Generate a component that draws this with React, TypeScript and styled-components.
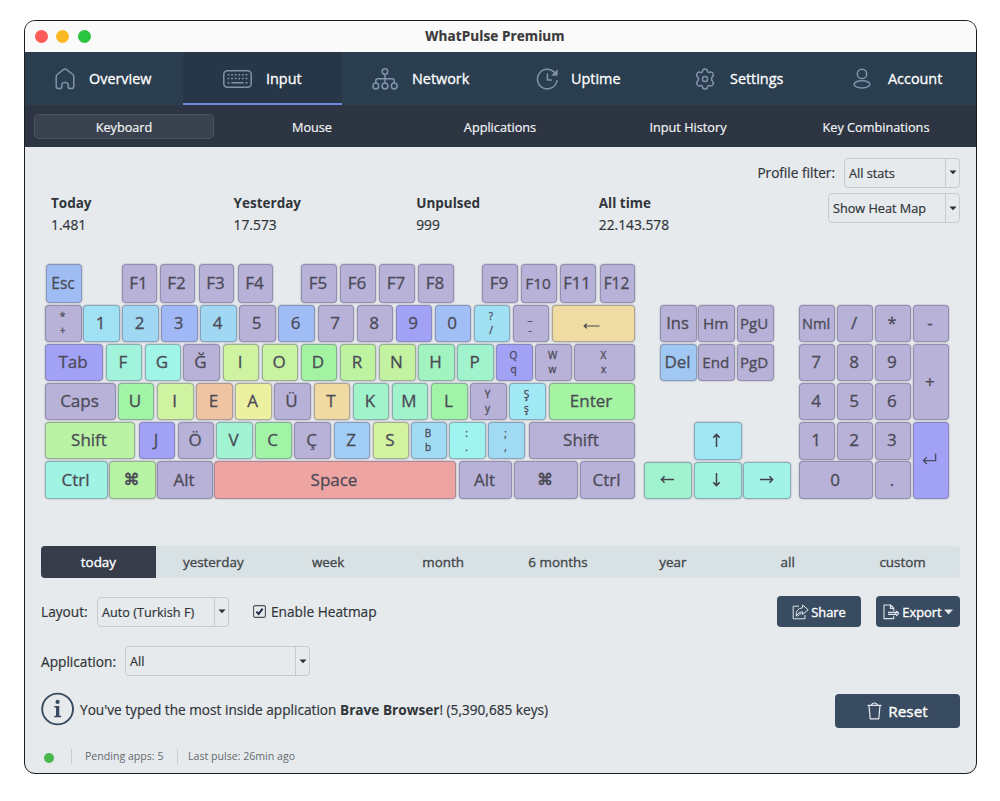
import React from 'react';
import styled, { createGlobalStyle, css } from 'styled-components';

const GlobalStyle = createGlobalStyle`
  * { box-sizing: border-box; }
  body {
    margin: 0;
    background: #fff;
    font-family: 'Open Sans', 'Noto Sans', sans-serif;
    font-size: 13.6px;
    color: #30353a;
    -webkit-text-stroke: 0.2px currentColor;
  }
`;

const Page = styled.div`
  width: 1000px;
  height: 801px;
  padding: 20px 23px 0 24px;
`;

const Window = styled.div`
  width: 953px;
  height: 754px;
  border: 1px solid #1c1c1e;
  border-radius: 11px;
  overflow: hidden;
  background: #e6eaed;
`;

const TitleBar = styled.header`
  position: relative;
  height: 31px;
  background: #fafafa;
  display: flex;
  align-items: center;
  padding: 0 10px;
  gap: 8.3px;
`;

const Light = styled.span<{ $color: string }>`
  width: 13px;
  height: 13px;
  border-radius: 50%;
  background: ${(p) => p.$color};
`;

const Title = styled.h1`
  position: absolute;
  left: 0;
  right: 11px;
  margin: 0;
  text-align: center;
  font-size: 13.5px;
  line-height: 31px;
  font-weight: 700;
  color: #3a3a3c;
  letter-spacing: 0.1px;
`;

const MainNav = styled.nav`
  display: grid;
  grid-template-columns: 158px 159px 156px 160px 158px 160px;
  height: 53px;
  background: #2b3e50;
`;

const NavItem = styled.a<{ $active?: boolean; $pad: number; $gap: number }>`
  display: flex;
  align-items: center;
  padding-left: ${(p) => p.$pad}px;
  gap: ${(p) => p.$gap}px;
  color: #fff;
  font-size: 14.4px;
  font-weight: 500;
  white-space: nowrap;
  -webkit-text-stroke-width: 0.3px;
  ${(p) =>
    p.$active &&
    css`
      background: #273748;
      box-shadow: inset 0 -2px #6f86e0;
    `}
  svg { flex: none; }
`;

const SubNav = styled.nav`
  display: grid;
  grid-template-columns: repeat(5, 180px);
  column-gap: 8px;
  height: 42px;
  padding: 9px 9px;
  background: #2d3442;
`;

const SubItem = styled.a<{ $active?: boolean }>`
  height: 25px;
  line-height: 24px;
  text-align: center;
  color: #f1f3f5;
  font-size: 12.7px;
  font-weight: 500;
  border: 1px solid ${(p) => (p.$active ? '#4b5260' : 'transparent')};
  border-radius: 5px;
  background: ${(p) => (p.$active ? '#3a414f' : 'transparent')};
`;

const Content = styled.main`
  padding: 11px 16px 0;
`;

const FilterRow = styled.div`
  display: flex;
  justify-content: flex-end;
  align-items: center;
  gap: 9px;
  height: 29px;
  font-weight: 500;
`;

const SelectBox = styled.div<{ $width: number }>`
  display: flex;
  width: ${(p) => p.$width}px;
  height: 30px;
  border: 1px solid #c6cbcf;
  border-radius: 4px;
  font-size: 12.7px;
  font-weight: 500;
  line-height: 29px;
  white-space: nowrap;
`;

const SelectText = styled.span`
  flex: 1;
  padding-left: 4px;
`;

const SelectArrow = styled.span`
  width: 14px;
  border-left: 1px solid #c6cbcf;
  display: flex;
  align-items: center;
  justify-content: center;
`;

const StatsRow = styled.div`
  display: flex;
  justify-content: space-between;
  height: 45px;
  margin-top: 6px;
  padding-left: 10px;
`;

const Stats = styled.dl`
  display: grid;
  grid-template-columns: repeat(4, 182.6px);
  margin: 0;
  line-height: 22px;
  font-weight: 500;
  dt { font-weight: 700; font-size: 13.5px; margin-top: -1px; -webkit-text-stroke-width: 0; }
  dd { margin: 0; font-size: 13.8px; }
`;

const Keyboard = styled.section`
  display: flex;
  height: 235px;
  margin: 26px 0 0 4px;
  color: #4b4b56;
  font-size: 17px;
  font-weight: 500;
  -webkit-text-stroke-width: 0.3px;
`;

const MainBlock = styled.div`
  display: flex;
  flex-direction: column;
  width: 590px;
`;

const KeyRow = styled.div<{ $height: number; $after: number }>`
  display: flex;
  height: ${(p) => p.$height}px;
  margin-bottom: ${(p) => p.$after}px;
`;

const Key = styled.div<{ $color?: string; $width?: number; $before?: number; $size?: number }>`
  flex: none;
  display: flex;
  flex-direction: column;
  align-items: center;
  justify-content: center;
  width: ${(p) => (p.$width ? `${p.$width}px` : 'auto')};
  margin-left: ${(p) => p.$before ?? 0}px;
  padding: 0 2px 1px 0;
  border: 1px solid rgba(110, 105, 135, 0.5);
  border-radius: 4px;
  background: ${(p) => p.$color ?? '#b8b1d8'};
  box-shadow: 0 0 1px 1px rgba(120, 120, 130, 0.2);
  font-size: ${(p) => p.$size ?? 17}px;
  line-height: 20px;
  white-space: nowrap;
`;

const DualLegend = styled.span`
  display: flex;
  flex-direction: column;
  align-items: center;
  font-size: 10px;
  line-height: 14px;
`;

const Command = styled.span`
  font-family: 'DejaVu Sans', sans-serif;
  font-size: 16px;
  -webkit-text-stroke-width: 0.6px;
`;

const SideBlock = styled.div`
  display: flex;
  flex-direction: column;
  justify-content: space-between;
  width: 147px;
  margin-left: 9px;
  padding-top: 41px;
`;

const EditKeys = styled.div`
  display: grid;
  grid-template: 37px 37px / repeat(3, 37px);
  column-gap: 1.3px;
  row-gap: 1.5px;
  margin-left: 16px;
`;

const ArrowKeys = styled.div`
  display: grid;
  grid-template: 37.5px 37.5px / repeat(3, 48px);
  gap: 1.6px;
`;

const NumPad = styled.div`
  display: grid;
  grid-template: repeat(5, 37.3px) / repeat(4, 36.4px);
  column-gap: 1.5px;
  row-gap: 1.8px;
  margin: 41px 0 0 8px;
`;

const Cell = styled(Key)<{ $col?: string; $row?: string }>`
  grid-column: ${(p) => p.$col ?? 'auto'};
  grid-row: ${(p) => p.$row ?? 'auto'};
`;

const RangeTabs = styled.div`
  display: grid;
  grid-template-columns: repeat(8, 1fr);
  height: 32px;
  margin-top: 47px;
  border-radius: 4px;
  overflow: hidden;
  background: #d8e1e4;
`;

const RangeTab = styled.button<{ $active?: boolean }>`
  border: 0;
  padding: 0;
  font: inherit;
  font-size: 13.4px;
  font-weight: 500;
  -webkit-text-stroke-width: 0.35px;
  color: ${(p) => (p.$active ? '#fff' : '#43474b')};
  background: ${(p) => (p.$active ? '#363c4a' : 'transparent')};
`;

const Toolbar = styled.div<{ $top: number; $height: number }>`
  display: flex;
  align-items: center;
  height: ${(p) => p.$height}px;
  margin-top: ${(p) => p.$top}px;
  font-weight: 500;
  white-space: nowrap;
`;

const FieldLabel = styled.span<{ $width: number }>`
  width: ${(p) => p.$width}px;
  font-size: 13.7px;
`;

const CheckLabel = styled.label`
  display: flex;
  align-items: center;
  gap: 5px;
  margin-left: 24px;
  font-size: 13.7px;
`;

const Actions = styled.div<{ $drop?: number }>`
  display: flex;
  gap: 15px;
  margin-left: auto;
  padding-top: ${(p) => p.$drop ?? 0}px;
`;

const Button = styled.button<{ $width: number; $height?: number; $size?: number; $gap?: number }>`
  display: flex;
  align-items: center;
  justify-content: center;
  gap: ${(p) => p.$gap ?? 2}px;
  width: ${(p) => p.$width}px;
  height: ${(p) => p.$height ?? 31}px;
  padding: 0;
  border: 0;
  border-radius: 4px;
  background: #394b60;
  color: #fff;
  font: inherit;
  font-size: ${(p) => p.$size ?? 12.9}px;
  font-weight: 500;
  -webkit-text-stroke-width: 0.35px;
`;

const Message = styled.p`
  margin: 0 0 0 5px;
  font-size: 13.65px;
  b { font-weight: 700; -webkit-text-stroke-width: 0; }
`;

const StatusBar = styled.footer`
  display: flex;
  align-items: center;
  height: 15px;
  margin: 23px 0 0 3px;
  font-size: 10.6px;
  color: #64696d;
  font-weight: 500;
  -webkit-text-stroke-width: 0;
`;

const StatusDot = styled.span`
  width: 10px;
  height: 10px;
  margin: 2px 17px 0 0;
  border-radius: 50%;
  background: #49b84c;
`;

const StatusText = styled.span<{ $width?: number; $pad: number }>`
  height: 15px;
  line-height: 15px;
  padding-left: ${(p) => p.$pad}px;
  width: ${(p) => (p.$width ? `${p.$width}px` : 'auto')};
  border-left: 1px solid #c9cdd0;
  white-space: nowrap;
`;

const stroke = { fill: 'none', stroke: '#8193ab', strokeWidth: 1.5, strokeLinecap: 'round', strokeLinejoin: 'round' } as const;

const HomeIcon = () => (
  <svg width="20" height="22" viewBox="0 0 20 22" {...stroke}>
    <path d="M1.2 8.6Q1.2 7.4 2.2 6.5L8.4 1.6Q10 .5 11.6 1.6L17.8 6.5Q18.8 7.4 18.8 8.6V18Q18.8 20.6 16.2 20.6H15Q13.2 20.6 13.2 18.8V16.6Q13.2 14.4 10 14.4T6.8 16.6V18.8Q6.8 20.6 5 20.6H3.8Q1.2 20.6 1.2 18Z" />
  </svg>
);

const KeyboardIcon = () => (
  <svg width="29" height="18" viewBox="0 0 29 18" {...stroke}>
    <rect x=".8" y=".8" width="27.4" height="16.4" rx="3.5" />
    <path strokeDasharray="1.8 1.8" strokeLinecap="butt" d="M4.5 4.8H25M4.5 8.6H25" />
    <path strokeLinecap="butt" d="M4.5 12.8H6.5M8.4 12.8H20.6M22.6 12.8H24.6" />
  </svg>
);

const NetworkIcon = () => (
  <svg width="26" height="22" viewBox="0 0 26 22" {...stroke}>
    <circle cx="13" cy="3.6" r="2.8" />
    <circle cx="3.8" cy="18" r="2.9" />
    <circle cx="13" cy="18" r="2.9" />
    <circle cx="22.2" cy="18" r="2.9" />
    <path d="M13 6.4V15M3.8 15V12.6Q3.8 10.8 5.6 10.8H20.4Q22.2 10.8 22.2 12.6V15" />
  </svg>
);

const UptimeIcon = () => (
  <svg width="23" height="22" viewBox="0 0 23 22" {...stroke}>
    <path d="M20.9 12.8A9.8 9.8 0 1 1 18.6 4.6L20.2 6.4" />
    <path d="M21.2 2.4V7.2H16.2Z" fill="#8193ab" strokeWidth=".8" />
    <path d="M11.4 6V12H15.4" />
  </svg>
);

const GearIcon = () => (
  <svg width="20" height="22" viewBox="0 0 20 22" {...stroke}>
    <path d="M7.5 3.2Q7.8 1 10 1T12.5 3.2Q13 4.9 14.8 4.3Q17 3.6 18 5.5T17.3 8.9Q15.7 11 17.3 13.1Q19 14.6 18 16.5T14.8 17.7Q13 17.1 12.5 18.8Q12.2 21 10 21T7.5 18.8Q7 17.1 5.2 17.7Q3 18.4 2 16.5T2.7 13.1Q4.3 11 2.7 8.9Q1 7.4 2 5.5T5.2 4.3Q7 4.9 7.5 3.2Z" />
    <circle cx="10" cy="11" r="2.6" />
  </svg>
);

const AccountIcon = () => (
  <svg width="18" height="21" viewBox="0 0 18 21" {...stroke}>
    <circle cx="9" cy="5.9" r="4.7" />
    <ellipse cx="9" cy="16.3" rx="7.9" ry="3.6" />
  </svg>
);

const Caret = () => (
  <svg width="8" height="5" viewBox="0 0 8 5">
    <path d="M.5 .5H7.5L4 4.3Z" fill="#2b2f38" />
  </svg>
);

const ArrowGlyph = ({ turn }: { turn: number }) => (
  <svg width="15" height="15" viewBox="0 0 15 15" fill="none" stroke="#43434e" strokeWidth="1.5">
    <path d="M14 7.5H1.4M4.6 4.3L1.4 7.5L4.6 10.7" transform={`rotate(${turn} 7.5 7.5)`} />
  </svg>
);

const BackspaceMark = styled.svg`
  margin: 6px 2px 0 0;
`;

const BackspaceGlyph = () => (
  <BackspaceMark width="17" height="8" viewBox="0 0 17 8" fill="none" stroke="#43434e" strokeWidth="1.2">
    <path d="M16.5 4H1M3.8 1.6L1.2 4L3.8 6.4" />
  </BackspaceMark>
);

const ReturnGlyph = () => (
  <svg width="15" height="13" viewBox="0 0 15 13" fill="none" stroke="#4a4a60" strokeWidth="1.4">
    <path d="M13.6 .5V7.6H1.6M4.8 4.3L1.5 7.6L4.8 10.9" />
  </svg>
);

const ShareIcon = () => (
  <svg width="17" height="16" viewBox="0 0 17 16" fill="none" stroke="#dfe5eb" strokeWidth="1" strokeLinejoin="round">
    <path d="M7 2.2H1.2V14.8H13V11" />
    <path d="M10.6 1L16.2 5.8L10.6 10.4V7.8Q6.4 7.4 4.2 12.2Q3.6 4.4 10.6 3.8Z" />
    <path d="M5.6 12.4Q7.4 9.4 9.4 9.8" />
  </svg>
);

const ExportIcon = () => (
  <svg width="17" height="16" viewBox="0 0 17 16" fill="none" stroke="#dfe5eb" strokeWidth="1.1" strokeLinejoin="round">
    <path d="M10.8 7V4.2L7.6 1H1V14.6H10.8V11.8M7.4 1V4.4H10.8M5 8.4H13M5 10.4H13M13.6 7.2L15.8 9.4L13.6 11.6L12.6 9.4Z" />
  </svg>
);

const TrashIcon = () => (
  <svg width="15" height="18" viewBox="0 0 15 18" fill="none" stroke="#e4e9ee" strokeWidth="1.2" strokeLinejoin="round">
    <path d="M.5 3.4H14.5M2 3.6L3.2 16.8H11.8L13 3.6M4.4 3.2Q5 1 7.5 1T10.6 3.2" />
  </svg>
);

const InfoIcon = () => (
  <svg width="34" height="34" viewBox="0 0 34 34">
    <circle cx="16.6" cy="17" r="15.4" fill="none" stroke="#394b60" strokeWidth="1.9" />
    <circle cx="16.6" cy="9.9" r="2.1" fill="#394b60" />
    <path d="M13.2 14H18.3V23.7H20.2V25.3H13.2V23.7H15V15.6H13.2Z" fill="#394b60" />
  </svg>
);

const CheckIcon = () => (
  <svg width="13" height="13" viewBox="0 0 13 13" fill="none">
    <rect x=".6" y=".6" width="11.8" height="11.8" rx="1.5" stroke="#4d5157" strokeWidth="1.1" />
    <path d="M3.4 6.6L5.6 9L9.6 3.6" stroke="#1f2545" strokeWidth="1.9" />
  </svg>
);

type KeySpec = {
  start: number;
  end: number;
  label?: string;
  dual?: [string, string];
  glyph?: 'command' | 'backspace';
  color?: string;
  size?: number;
};

const k = (start: number, end: number, label: string, color?: string, size?: number): KeySpec => ({ start, end, label, color, size });
const d = (start: number, end: number, top: string, bottom: string, color?: string): KeySpec => ({ start, end, dual: [top, bottom], color });

const rows: { height: number; after: number; keys: KeySpec[] }[] = [
  {
    height: 39, after: 2,
    keys: [
      k(1, 37, 'Esc', '#a0bdf3', 15.5), k(77, 112, 'F1'), k(115, 150, 'F2'), k(154, 189, 'F3'), k(193, 228, 'F4'),
      k(256, 292, 'F5'), k(295, 331, 'F6'), k(334, 370, 'F7'), k(373, 409, 'F8'),
      k(437, 473, 'F9'), k(476, 512, 'F10', undefined, 15.3), k(515, 551, 'F11', undefined, 16.5), k(555, 590, 'F12', undefined, 15.5),
    ],
  },
  {
    height: 37, after: 2,
    keys: [
      d(0, 37, '*', '+'), k(38, 75, '1', '#a0e1f3'), k(77, 114, '2', '#a0d8f3'), k(116, 153, '3', '#a0b9f6'),
      k(155, 192, '4', '#a0d8f3'), k(194, 231, '5'), k(233, 270, '6', '#a0bcf5'), k(273, 309, '7'), k(312, 348, '8'),
      k(351, 387, '9', '#a1a2f6'), k(390, 426, '0', '#a1bef5'), d(429, 465, '?', '/', '#a1e0f3'), d(468, 504, '_', '-'),
      { start: 507, end: 590, glyph: 'backspace', color: '#eedca3' },
    ],
  },
  {
    height: 37, after: 2,
    keys: [
      k(0, 58, 'Tab', '#a1a2f6'), k(61, 97, 'F', '#a1f3dc'), k(100, 136, 'G', '#a1f4e8'), k(138, 175, 'Ğ'),
      k(178, 214, 'I', '#cff3a1'), k(217, 253, 'O', '#c8f3a1'), k(256, 292, 'D', '#a3f3a3'), k(295, 331, 'R', '#bdf3a1'),
      k(334, 371, 'N', '#c3f3a1'), k(373, 410, 'H', '#a1f3c0'), k(412, 449, 'P', '#a1f3cd'), d(451, 488, 'Q', 'q', '#a1a2f6'),
      d(490, 527, 'W', 'w'), d(529, 590, 'X', 'x'),
    ],
  },
  {
    height: 37, after: 2,
    keys: [
      k(0, 71, 'Caps'), k(73, 109, 'U', '#a1f3a5'), k(112, 149, 'I', '#cff3a1'), k(151, 188, 'E', '#efc4a3'),
      k(190, 227, 'A', '#ebf1a1'), k(229, 266, 'Ü'), k(269, 305, 'T', '#efdba1'), k(308, 344, 'K', '#a1f3cc'),
      k(347, 383, 'M', '#a1f3cb'), k(386, 423, 'L', '#a1f3a8'), d(425, 462, 'Y', 'y'), d(464, 501, 'Ş', 'ş', '#a1e9f5'),
      k(504, 590, 'Enter', '#a5f4a1'),
    ],
  },
  {
    height: 37, after: 2,
    keys: [
      k(0, 90, 'Shift', '#b9f3a3'), k(94, 130, 'J', '#a1a2f6'), k(133, 169, 'Ö'), k(171, 208, 'V', '#a1f3d3'),
      k(210, 247, 'C', '#a1f3a6'), k(249, 286, 'Ç'), k(289, 325, 'Z', '#a1cef5'), k(328, 364, 'S', '#d4f3a1'),
      d(366, 402, 'B', 'b', '#a1dbf3'), d(404, 441, ':', '.', '#a1f3ef'), d(443, 480, ';', ',', '#a1daf3'), k(484, 590, 'Shift'),
    ],
  },
  {
    height: 38, after: 0,
    keys: [
      k(0, 63, 'Ctrl', '#a1f3e3'), { start: 64, end: 111, glyph: 'command', color: '#b7f3a3' }, k(112, 168, 'Alt'),
      k(169, 411, 'Space', '#efa4a4'), k(414, 467, 'Alt'), { start: 469, end: 533, glyph: 'command' }, k(535, 590, 'Ctrl'),
    ],
  },
];

const KeyLegend = ({ spec }: { spec: KeySpec }) => {
  if (spec.glyph === 'command') return <Command>⌘</Command>;
  if (spec.glyph === 'backspace') return <BackspaceGlyph />;
  if (spec.dual)
    return (
      <DualLegend>
        <span>{spec.dual[0]}</span>
        <span>{spec.dual[1]}</span>
      </DualLegend>
    );
  return <>{spec.label}</>;
};

const Select = ({ width, children }: { width: number; children: string }) => (
  <SelectBox $width={width}>
    <SelectText>{children}</SelectText>
    <SelectArrow><Caret /></SelectArrow>
  </SelectBox>
);

const navItems = [
  { label: 'Overview', icon: <HomeIcon />, pad: 30, gap: 14 },
  { label: 'Input', icon: <KeyboardIcon />, pad: 40, gap: 14, active: true },
  { label: 'Network', icon: <NetworkIcon />, pad: 30, gap: 14 },
  { label: 'Uptime', icon: <UptimeIcon />, pad: 38, gap: 12 },
  { label: 'Settings', icon: <GearIcon />, pad: 37, gap: 15 },
  { label: 'Account', icon: <AccountIcon />, pad: 37, gap: 17 },
];

const stats = [
  ['Today', '1.481'],
  ['Yesterday', '17.573'],
  ['Unpulsed', '999'],
  ['All time', '22.143.578'],
];

const ranges = ['today', 'yesterday', 'week', 'month', '6 months', 'year', 'all', 'custom'];

export default function App() {
  return (
    <Page>
      <GlobalStyle />
      <Window>
        <TitleBar>
          <Light $color="#fc5b57" />
          <Light $color="#fdb924" />
          <Light $color="#29c440" />
          <Title>WhatPulse Premium</Title>
        </TitleBar>
        <MainNav>
          {navItems.map((n) => (
            <NavItem key={n.label} $active={n.active} $pad={n.pad} $gap={n.gap}>
              {n.icon}
              {n.label}
            </NavItem>
          ))}
        </MainNav>
        <SubNav>
          {['Keyboard', 'Mouse', 'Applications', 'Input History', 'Key Combinations'].map((s, i) => (
            <SubItem key={s} $active={i === 0}>{s}</SubItem>
          ))}
        </SubNav>
        <Content>
          <FilterRow>
            <span>Profile filter:</span>
            <Select width={116}>All stats</Select>
          </FilterRow>
          <StatsRow>
            <Stats>
              {stats.map(([name, value]) => (
                <div key={name}>
                  <dt>{name}</dt>
                  <dd>{value}</dd>
                </div>
              ))}
            </Stats>
            <Select width={132}>Show Heat Map</Select>
          </StatsRow>

          <Keyboard>
            <MainBlock>
              {rows.map((row, r) => (
                <KeyRow key={r} $height={row.height} $after={row.after}>
                  {row.keys.map((key, i) => (
                    <Key
                      key={i}
                      $color={key.color}
                      $size={key.size}
                      $width={key.end - key.start}
                      $before={key.start - (i ? row.keys[i - 1].end : 0)}
                    >
                      <KeyLegend spec={key} />
                    </Key>
                  ))}
                </KeyRow>
              ))}
            </MainBlock>
            <SideBlock>
              <EditKeys>
                <Key $size={16.5}>Ins</Key>
                <Key $size={15.3}>Hm</Key>
                <Key $size={15}>PgU</Key>
                <Key $color="#a1c8f3">Del</Key>
                <Key $size={15.2}>End</Key>
                <Key $size={15}>PgD</Key>
              </EditKeys>
              <ArrowKeys>
                <Cell $col="2" $color="#a1e7f3"><ArrowGlyph turn={90} /></Cell>
                <Cell $row="2" $col="1" $color="#a1f3d0"><ArrowGlyph turn={0} /></Cell>
                <Cell $row="2" $col="2" $color="#a1f3df"><ArrowGlyph turn={-90} /></Cell>
                <Cell $row="2" $col="3" $color="#a1f3e8"><ArrowGlyph turn={180} /></Cell>
              </ArrowKeys>
            </SideBlock>
            <NumPad>
              <Cell $size={14.6}>Nml</Cell>
              <Cell>/</Cell>
              <Cell>*</Cell>
              <Cell>-</Cell>
              <Cell>7</Cell>
              <Cell>8</Cell>
              <Cell>9</Cell>
              <Cell $col="4" $row="2 / span 2">+</Cell>
              <Cell>4</Cell>
              <Cell>5</Cell>
              <Cell>6</Cell>
              <Cell>1</Cell>
              <Cell>2</Cell>
              <Cell>3</Cell>
              <Cell $col="4" $row="4 / span 2" $color="#a1a2f6"><ReturnGlyph /></Cell>
              <Cell $col="1 / span 2" $row="5">0</Cell>
              <Cell>.</Cell>
            </NumPad>
          </Keyboard>

          <RangeTabs>
            {ranges.map((r, i) => (
              <RangeTab key={r} $active={i === 0}>{r}</RangeTab>
            ))}
          </RangeTabs>

          <Toolbar $top={18} $height={31}>
            <FieldLabel $width={56}>Layout:</FieldLabel>
            <Select width={132}>Auto (Turkish F)</Select>
            <CheckLabel>
              <CheckIcon />
              Enable Heatmap
            </CheckLabel>
            <Actions>
              <Button $width={84}><ShareIcon />Share</Button>
              <Button $width={84}>
                <ExportIcon />
                Export
                <svg width="9" height="6" viewBox="0 0 9 6"><path d="M0 .5H9L4.5 5.4Z" fill="#e4e9ee" /></svg>
              </Button>
            </Actions>
          </Toolbar>
          <Toolbar $top={19} $height={30}>
            <FieldLabel $width={84}>Application:</FieldLabel>
            <Select width={185}>All</Select>
          </Toolbar>
          <Toolbar $top={16} $height={34}>
            <InfoIcon />
            <Message>
              You've typed the most inside application <b>Brave Browser</b>! (5,390,685 keys)
            </Message>
            <Actions $drop={3}>
              <Button $width={125} $height={34} $size={15.3} $gap={6}><TrashIcon />Reset</Button>
            </Actions>
          </Toolbar>
          <StatusBar>
            <StatusDot />
            <StatusText $width={106} $pad={13}>Pending apps: 5</StatusText>
            <StatusText $pad={10}>Last pulse: 26min ago</StatusText>
          </StatusBar>
        </Content>
      </Window>
    </Page>
  );
}
